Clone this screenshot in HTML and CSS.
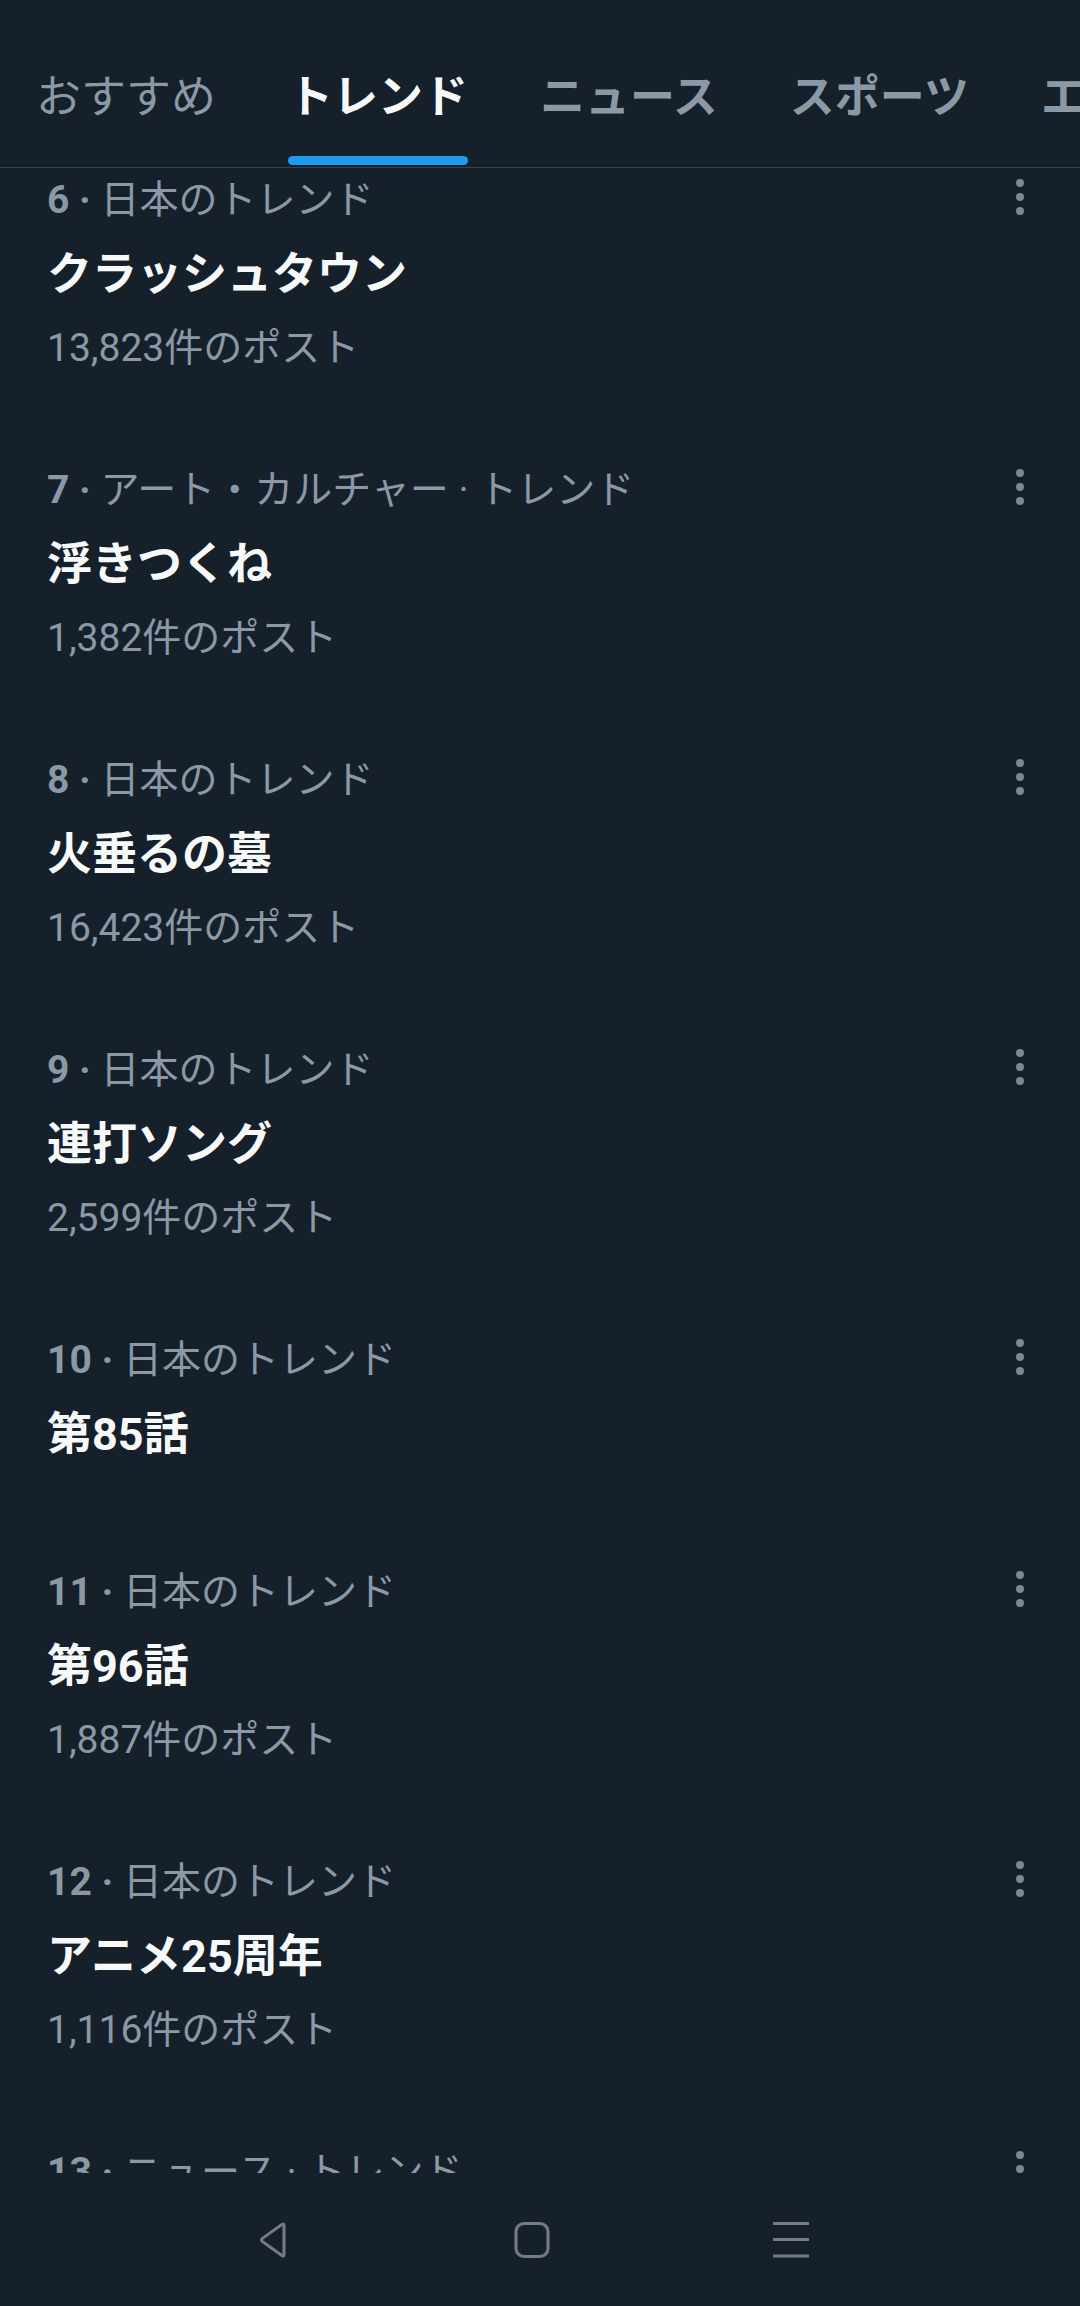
FILE: index.html
```html
<!DOCTYPE html>
<html lang="ja">
<head>
<meta charset="utf-8">
<title>トレンド</title>
<link rel="stylesheet" href="styles.css">
</head>
<body>
<div class="screen">
  <header class="tabs">
    <div class="tab"><span class="tab-label light">おすすめ</span></div>
    <div class="tab active"><span class="tab-label">トレンド</span><span class="indicator"></span></div>
    <div class="tab"><span class="tab-label">ニュース</span></div>
    <div class="tab"><span class="tab-label">スポーツ</span></div>
    <div class="tab"><span class="tab-label">エンターテイメント</span></div>
  </header>

  <main class="viewport">
    <ul class="trends">
      <li class="trend">
        <div class="meta"><span class="cat"><b>6 ·</b> 日本のトレンド</span><svg class="more" viewBox="0 0 8 36"><circle cx="4" cy="4" r="4"/><circle cx="4" cy="18" r="4"/><circle cx="4" cy="32" r="4"/></svg></div>
        <div class="title">クラッシュタウン</div>
        <div class="count">13,823件のポスト</div>
      </li>
      <li class="trend">
        <div class="meta"><span class="cat"><b>7 ·</b> アート・カルチャー · トレンド</span><svg class="more" viewBox="0 0 8 36"><circle cx="4" cy="4" r="4"/><circle cx="4" cy="18" r="4"/><circle cx="4" cy="32" r="4"/></svg></div>
        <div class="title">浮きつくね</div>
        <div class="count">1,382件のポスト</div>
      </li>
      <li class="trend">
        <div class="meta"><span class="cat"><b>8 ·</b> 日本のトレンド</span><svg class="more" viewBox="0 0 8 36"><circle cx="4" cy="4" r="4"/><circle cx="4" cy="18" r="4"/><circle cx="4" cy="32" r="4"/></svg></div>
        <div class="title">火垂るの墓</div>
        <div class="count">16,423件のポスト</div>
      </li>
      <li class="trend">
        <div class="meta"><span class="cat"><b>9 ·</b> 日本のトレンド</span><svg class="more" viewBox="0 0 8 36"><circle cx="4" cy="4" r="4"/><circle cx="4" cy="18" r="4"/><circle cx="4" cy="32" r="4"/></svg></div>
        <div class="title">連打ソング</div>
        <div class="count">2,599件のポスト</div>
      </li>
      <li class="trend">
        <div class="meta"><span class="cat"><b>10 ·</b> 日本のトレンド</span><svg class="more" viewBox="0 0 8 36"><circle cx="4" cy="4" r="4"/><circle cx="4" cy="18" r="4"/><circle cx="4" cy="32" r="4"/></svg></div>
        <div class="title">第85話</div>
      </li>
      <li class="trend">
        <div class="meta"><span class="cat"><b>11 ·</b> 日本のトレンド</span><svg class="more" viewBox="0 0 8 36"><circle cx="4" cy="4" r="4"/><circle cx="4" cy="18" r="4"/><circle cx="4" cy="32" r="4"/></svg></div>
        <div class="title">第96話</div>
        <div class="count">1,887件のポスト</div>
      </li>
      <li class="trend">
        <div class="meta"><span class="cat"><b>12 ·</b> 日本のトレンド</span><svg class="more" viewBox="0 0 8 36"><circle cx="4" cy="4" r="4"/><circle cx="4" cy="18" r="4"/><circle cx="4" cy="32" r="4"/></svg></div>
        <div class="title">アニメ25周年</div>
        <div class="count">1,116件のポスト</div>
      </li>
      <li class="trend">
        <div class="meta"><span class="cat"><b>13 ·</b> ニュース · トレンド</span><svg class="more" viewBox="0 0 8 36"><circle cx="4" cy="4" r="4"/><circle cx="4" cy="18" r="4"/><circle cx="4" cy="32" r="4"/></svg></div>
        <div class="title">速報</div>
        <div class="count">5,210件のポスト</div>
      </li>
    </ul>
  </main>

  <nav class="navbar">
    <svg class="nav-icon" viewBox="0 0 36 36"><path d="M29 3.5 L29 32.5 Q29 35 27 33.6 L7.5 19.6 Q5.6 18 7.5 16.4 L27 2.4 Q29 1 29 3.5 Z"/></svg>
    <svg class="nav-icon" viewBox="0 0 36 36"><rect x="2" y="1.5" width="32" height="33" rx="8" ry="8"/></svg>
    <svg class="nav-icon" viewBox="0 0 36 36"><path d="M0 1.5 H36 M0 17.5 H36 M0 34 H36"/></svg>
  </nav>
</div>
</body>
</html>
```

FILE: styles.css
```css
* { box-sizing: border-box; }

html, body {
  margin: 0;
  padding: 0;
  background: #15202b;
}

body {
  font-family: Roboto, "Noto Sans CJK JP", sans-serif;
  color: #f7f9f9;
}

.screen {
  width: 1080px;
  height: 2306px;
  display: flex;
  flex-direction: column;
  overflow: hidden;
  background: #15202b;
}

/* ---------- tabs ---------- */
.tabs {
  display: flex;
  align-items: flex-start;
  flex: none;
  padding: 68px 0 2px 0;
  height: 168px;
  border-bottom: 1px solid #38444d;
  white-space: nowrap;
  overflow: hidden;
}

.tab {
  display: flex;
  flex-direction: column;
  align-items: stretch;
  flex: none;
  padding: 0 36px;
}

.tab-label {
  font-size: 45px;
  line-height: 60px;
  font-weight: 700;
  color: #8b98a5;
}

.tab-label.light { font-weight: 400; }

.tab.active .tab-label { color: #f7f9f9; }

.indicator {
  display: block;
  height: 9px;
  margin-top: 28px;
  border-radius: 5px;
  background: #1d9bf0;
}

/* ---------- list ---------- */
.viewport {
  flex: none;
  height: 2005px;
  overflow: hidden;
}

.trends {
  list-style: none;
  margin: -13px 0 0 0;
  padding: 0;
}

.trend {
  padding: 20px 56px 68px 47px;
}

.meta {
  display: flex;
  align-items: center;
  justify-content: space-between;
  height: 50px;
}

.cat {
  font-size: 39px;
  line-height: 50px;
  color: #8b98a5;
  white-space: nowrap;
}

.cat b { font-weight: 700; }

.more {
  width: 8px;
  height: 36px;
  fill: #7b8794;
  margin-top: -6px;
  flex: none;
}

.title {
  margin-top: 21px;
  margin-bottom: 15px;
  font-size: 45px;
  line-height: 58px;
  font-weight: 700;
  color: #f7f9f9;
}

.count {
  font-size: 39px;
  line-height: 58px;
  color: #8b98a5;
}

/* ---------- system nav ---------- */
.navbar {
  flex: 1;
  display: flex;
  align-items: center;
  gap: 223px;
  padding: 0 0 0 255px;
}

.nav-icon {
  width: 36px;
  height: 36px;
  fill: none;
  stroke: #747d86;
  stroke-width: 3;
  stroke-linejoin: round;
  flex: none;
}
```
